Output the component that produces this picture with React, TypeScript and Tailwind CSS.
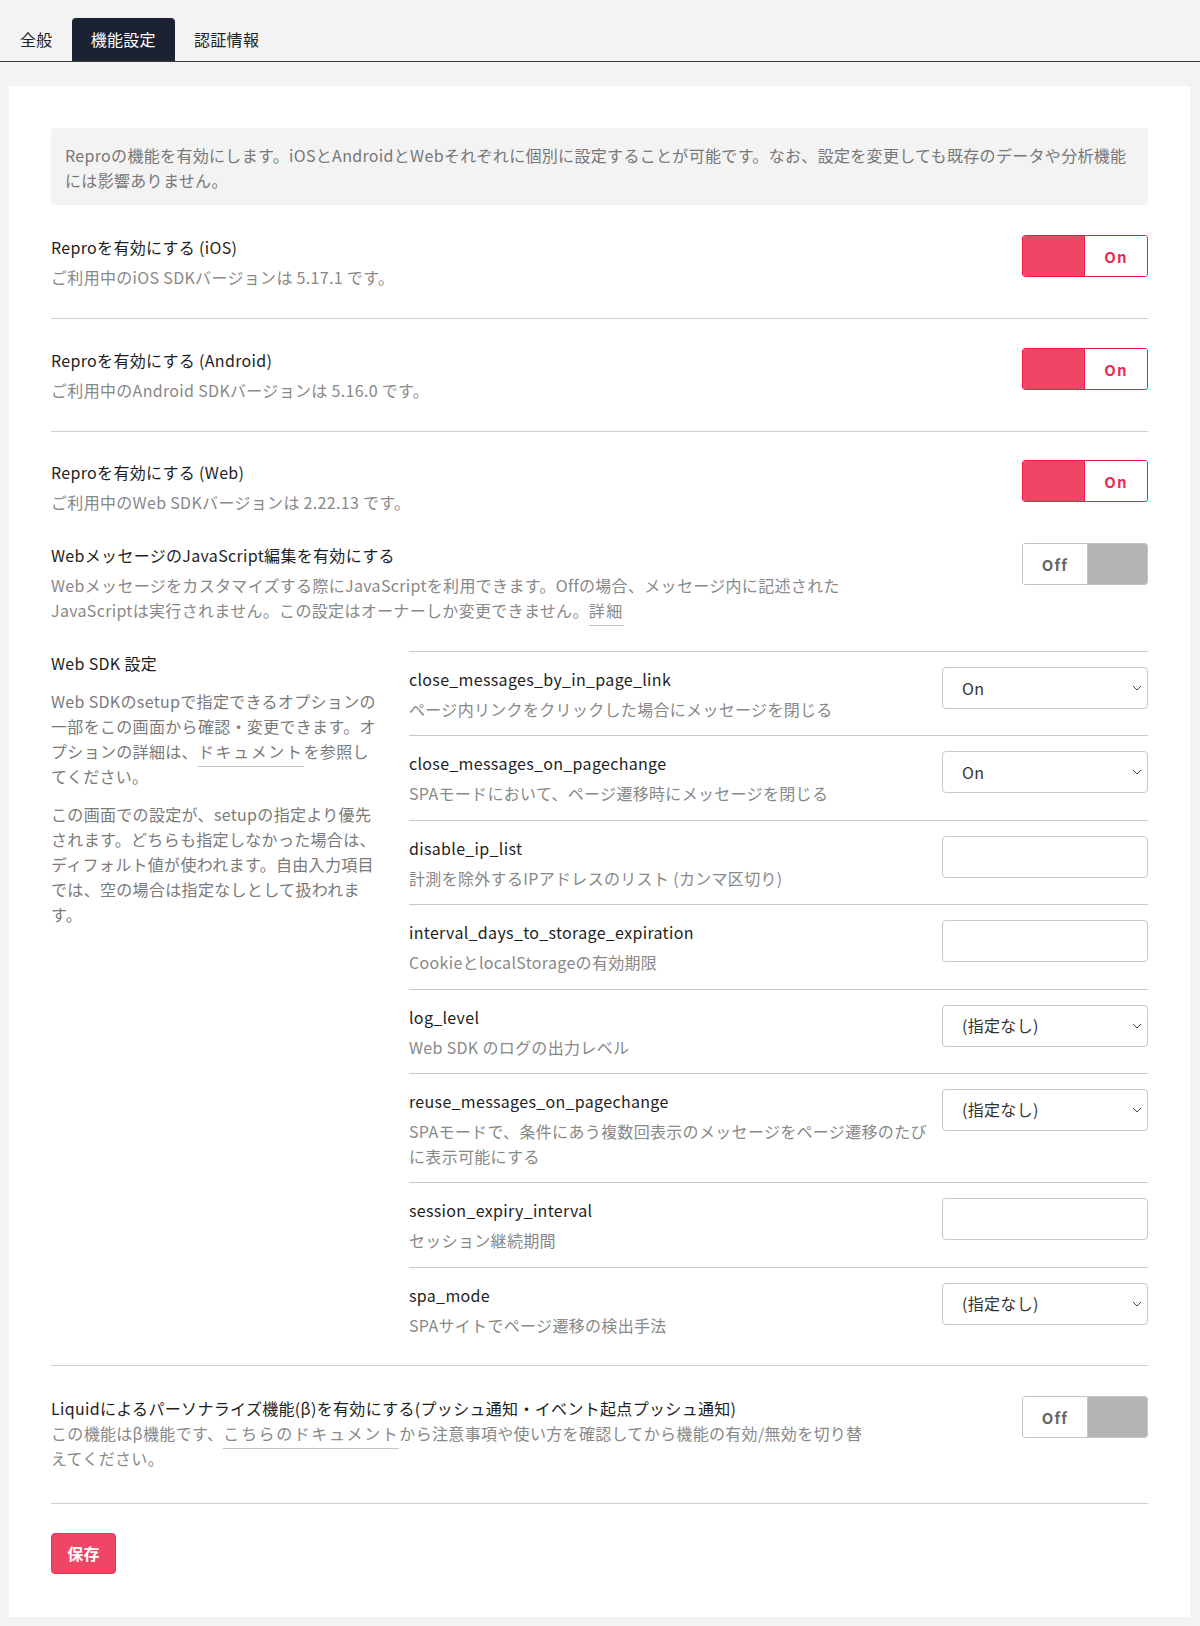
import React from "react";

function Toggle({ on }: { on: boolean }) {
  if (on) {
    return (
      <div className="flex h-[42px] w-[126px] shrink-0 overflow-hidden rounded-[3px] border border-[#f2194b]">
        <div className="w-[62px] border-r border-[#f2194b] bg-[#ee4664]" />
        <div className="flex flex-1 items-center justify-center bg-white text-[15px] font-bold tracking-[0.08em] text-[#ec2a55]">
          On
        </div>
      </div>
    );
  }
  return (
    <div className="flex h-[42px] w-[126px] shrink-0 overflow-hidden rounded-[3px] border border-[#c4c4c4]">
      <div className="flex w-[65px] items-center justify-center border-r border-[#c4c4c4] bg-white text-[15px] font-bold tracking-[0.08em] text-[#666]">
        Off
      </div>
      <div className="flex-1 bg-[#b4b4b7]" />
    </div>
  );
}

function Select({ value }: { value: string }) {
  return (
    <div className="flex h-[42px] w-[206px] shrink-0 items-center justify-between rounded-[4px] border border-[#c8c8c8] bg-white pl-[19px] pr-[5px] text-[#333]">
      <span>{value}</span>
      <svg width="10" height="6" viewBox="0 0 10 6" fill="none">
        <path d="M1 1l4 4 4-4" stroke="#444" strokeWidth="1" />
      </svg>
    </div>
  );
}

function Input() {
  return <div className="h-[42px] w-[206px] shrink-0 rounded-[4px] border border-[#c8c8c8] bg-white" />;
}

type Opt = { name: string; desc: string; ctl: "select" | "input"; value?: string };

const opts: Opt[] = [
  { name: "close_messages_by_in_page_link", desc: "ページ内リンクをクリックした場合にメッセージを閉じる", ctl: "select", value: "On" },
  { name: "close_messages_on_pagechange", desc: "SPAモードにおいて、ページ遷移時にメッセージを閉じる", ctl: "select", value: "On" },
  { name: "disable_ip_list", desc: "計測を除外するIPアドレスのリスト (カンマ区切り)", ctl: "input" },
  { name: "interval_days_to_storage_expiration", desc: "CookieとlocalStorageの有効期限", ctl: "input" },
  { name: "log_level", desc: "Web SDK のログの出力レベル", ctl: "select", value: "(指定なし)" },
  {
    name: "reuse_messages_on_pagechange",
    desc: "SPAモードで、条件にあう複数回表示のメッセージをページ遷移のたびに表示可能にする",
    ctl: "select",
    value: "(指定なし)",
  },
  { name: "session_expiry_interval", desc: "セッション継続期間", ctl: "input" },
  { name: "spa_mode", desc: "SPAサイトでページ遷移の検出手法", ctl: "select", value: "(指定なし)" },
];

function Link({ children }: { children: React.ReactNode }) {
  return <span className="border-b border-[#c4c4c4] pb-[3px] tracking-[0.1em]">{children}</span>;
}

export default function App() {
  return (
    <div className="min-h-[1626px] bg-[#f3f3f3] font-['Noto_Sans_CJK_JP',sans-serif] text-[16px] leading-[25px] tracking-[0.02em] text-[#1e1e1e]">
      {/* tabs */}
      <div className="flex h-[62px] items-end border-b border-[#3a3a3a] pl-[1px]">
        <div className="flex h-[43px] items-center px-[19px] text-[#222]">全般</div>
        <div className="flex h-[43px] items-center rounded-t-[4px] bg-[#1b2232] px-[19px] text-white">機能設定</div>
        <div className="flex h-[43px] items-center px-[19px] text-[#222]">認証情報</div>
      </div>

      {/* panel */}
      <div className="ml-[9px] mr-[10px] mt-[24px] bg-white px-[42px] pb-[43px] pt-[42px]">
        <div className="rounded-[3px] bg-[#f3f3f3] px-[14px] pb-[12px] pt-[15px] text-[#777]">
          Reproの機能を有効にします。iOSとAndroidとWebそれぞれに個別に設定することが可能です。なお、設定を変更しても既存のデータや分析機能には影響ありません。
        </div>

        {/* row 1 */}
        <div className="mt-[30px] flex items-start justify-between border-b border-[#d0d0d0] pb-[28px]">
          <div>
            <div className="mb-[5px]">Reproを有効にする (iOS)</div>
            <div className="text-[#888]">ご利用中のiOS SDKバージョンは 5.17.1 です。</div>
          </div>
          <Toggle on />
        </div>

        {/* row 2 */}
        <div className="flex items-start justify-between border-b border-[#d0d0d0] pb-[28px] pt-[29px]">
          <div>
            <div className="mb-[5px]">Reproを有効にする (Android)</div>
            <div className="text-[#888]">ご利用中のAndroid SDKバージョンは 5.16.0 です。</div>
          </div>
          <Toggle on />
        </div>

        {/* row 3 */}
        <div className="flex items-start justify-between pt-[28px]">
          <div>
            <div className="mb-[5px]">Reproを有効にする (Web)</div>
            <div className="text-[#888]">ご利用中のWeb SDKバージョンは 2.22.13 です。</div>
          </div>
          <Toggle on />
        </div>

        {/* row 4 */}
        <div className="flex items-start justify-between pt-[28px]">
          <div className="max-w-[823px]">
            <div className="mb-[5px]">WebメッセージのJavaScript編集を有効にする</div>
            <div className="text-[#888]">
              Webメッセージをカスタマイズする際にJavaScriptを利用できます。Offの場合、メッセージ内に記述されたJavaScriptは実行されません。この設定はオーナーしか変更できません。<Link>詳細</Link>
            </div>
          </div>
          <Toggle on={false} />
        </div>

        {/* Web SDK settings */}
        <div className="mt-[28px] grid grid-cols-[328px_1fr] gap-x-[30px] border-b border-[#d0d0d0] pb-[14px]">
          <div>
            <div className="mb-[13px]">Web SDK 設定</div>
            <p className="mb-[13px] text-[#7a7a7a]">
              Web SDKのsetupで指定できるオプションの一部をこの画面から確認・変更できます。オプションの詳細は、<Link>ドキュメント</Link>を参照してください。
            </p>
            <p className="text-[#7a7a7a]">
              この画面での設定が、setupの指定より優先されます。どちらも指定しなかった場合は、ディフォルト値が使われます。自由入力項目では、空の場合は指定なしとして扱われます。
            </p>
          </div>
          <div className="border-t border-[#c8c8c8]">
            {opts.map((o, i) => (
              <div
                key={o.name}
                className={`flex items-start gap-[8px] pb-[13.4px] pt-[15px] ${
                  i < opts.length - 1 ? "border-b border-[#c8c8c8]" : ""
                }`}
              >
                <div className="min-w-0 flex-1">
                  <div className="mb-[5px]">{o.name}</div>
                  <div className="text-[#888]">{o.desc}</div>
                </div>
                {o.ctl === "select" ? <Select value={o.value ?? ""} /> : <Input />}
              </div>
            ))}
          </div>
        </div>

        {/* Liquid */}
        <div className="flex items-start justify-between border-b border-[#d0d0d0] pb-[32px] pt-[30px]">
          <div className="max-w-[823px]">
            <div>Liquidによるパーソナライズ機能(β)を有効にする(プッシュ通知・イベント起点プッシュ通知)</div>
            <div className="text-[#888]">
              この機能はβ機能です、<Link>こちらのドキュメント</Link>から注意事項や使い方を確認してから機能の有効/無効を切り替えてください。
            </div>
          </div>
          <Toggle on={false} />
        </div>

        <div className="pt-[29px]">
          <button className="h-[41px] w-[65px] rounded-[4px] border border-[#e8305a] bg-[#ee4664] font-bold text-white">
            保存
          </button>
        </div>
      </div>
    </div>
  );
}
